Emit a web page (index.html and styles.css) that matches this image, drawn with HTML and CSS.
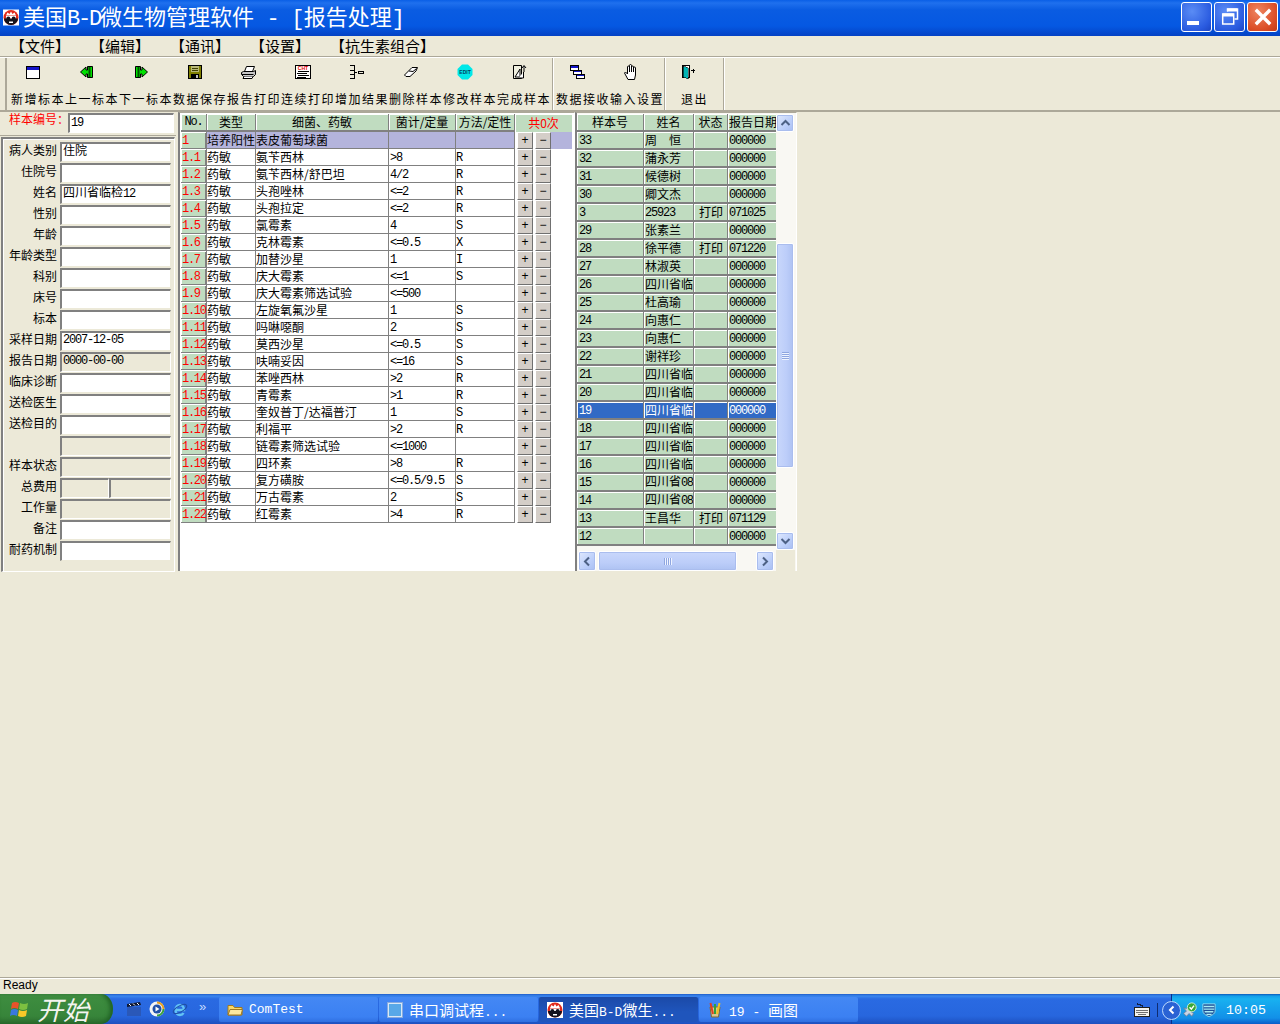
FILE: index.html
```html
<!DOCTYPE html>
<html lang="zh-CN">
<head>
  <meta charset="UTF-8" />
  <title>美国B-D微生物管理软件 - [报告处理]</title>
  <link rel="stylesheet" href="styles.css">
</head>
<body>
  <svg class="defs" width="0" height="0">
    <symbol id="logo" viewBox="0 0 16 16">
      <rect width="16" height="16" fill="#fff"/>
      <circle cx="8" cy="8" r="7.5" fill="#e02a1c"/>
      <path d="M3 6l1.5-3 2 1.5L8 2l1.5 2.500 2-1.500L13 6z" fill="#fff"/>
      <path d="M1 9h14a7 6.500 0 0 1-14 0z" fill="#14141e"/>
      <rect x="3" y="6.500" width="10" height="2.500" fill="#fff"/>
      <circle cx="5.300" cy="9" r="2" fill="#14141e"/>
      <circle cx="10.700" cy="9" r="2" fill="#14141e"/>
      <rect x="6" y="12" width="4" height="1.500" fill="#fff"/>
    </symbol>
  </svg>

  <header class="titlebar">
    <svg class="title-logo"><use href="#logo"/></svg>
    <h1 class="title-text">美国<span class="en">B-D</span>微生物管理软件<span class="en title-sep"> - [</span>报告处理<span class="en">]</span></h1>
    <div class="caption">
      <div class="cap-btn">
        <span class="cap-min"></span>
      </div>
      <div class="cap-btn">
        <svg width="22" height="22" viewBox="0 0 22 22" fill="none" stroke="#fff"><path d="M8.500 5.500V3h10v10h-3" stroke-width="1.500"/><path d="M8 4h10" stroke-width="3"/><rect x="3.700" y="8" width="11" height="10" stroke-width="1.500"/><path d="M3.700 9h11" stroke-width="3"/></svg>
      </div>
      <div class="cap-btn cap-close">
        <svg width="22" height="22" viewBox="0 0 22 22" stroke="#fff" stroke-width="3.400" stroke-linecap="square"><path d="M5 5l12 12M17 5L5 17"/></svg>
      </div>
    </div>
  </header>

  <nav class="menu">
    <span class="menu-item">【文件】</span>
    <span class="menu-item">【编辑】</span>
    <span class="menu-item">【通讯】</span>
    <span class="menu-item">【设置】</span>
    <span class="menu-item">【抗生素组合】</span>
  </nav>

  <div class="toolbar">
    <div class="tool-group group-main">
      <div class="tool">
        <svg class="ico" viewBox="0 0 16 16" shape-rendering="crispEdges"><rect x="1.500" y="2.500" width="13" height="12" fill="#fff" stroke="#000"/><rect x="2" y="3" width="12" height="3" fill="#1414c8"/></svg>
        <span class="tool-label">新增标本</span>
      </div>
      <div class="tool">
        <svg class="ico" viewBox="0 0 16 16"><path d="M1.500 8L7 3v3h1.500V2.500h5v11h-5V10H7v3z" fill="#00e000" stroke="#000"/><rect x="9.500" y="3" width="2" height="10" fill="#005000"/></svg>
        <span class="tool-label">上一标本</span>
      </div>
      <div class="tool">
        <svg class="ico" viewBox="0 0 16 16"><path d="M14.500 8L9 3v3H7.500V2.500h-5v11h5V10H9v3z" fill="#00e000" stroke="#000"/><rect x="4.500" y="3" width="2" height="10" fill="#005000"/></svg>
        <span class="tool-label">下一标本</span>
      </div>
      <div class="tool">
        <svg class="ico" viewBox="0 0 16 16" shape-rendering="crispEdges"><rect x="1.500" y="1.500" width="13" height="13" fill="#808000" stroke="#000"/><rect x="4" y="2" width="8" height="6" fill="#b8b878"/><path d="M5 4h6M5 6h6" stroke="#404000"/><rect x="4" y="10" width="8" height="5" fill="#000"/><rect x="9" y="11" width="2" height="3" fill="#c0c0c0"/></svg>
        <span class="tool-label">数据保存</span>
      </div>
      <div class="tool">
        <svg class="ico" viewBox="0 0 16 16" fill="#fff" stroke="#000"><path d="M5.500 2.500h8l-2 5h-8z"/><path d="M2.500 7.500h10l2-1v4l-2 2h-10l-2-2v-2z" fill="#c8c8c8"/><path d="M1 10.500h11.500" /><path d="M3 12.500l-1 2h9l1-2"/></svg>
        <span class="tool-label">报告打印</span>
      </div>
      <div class="tool">
        <svg class="ico" viewBox="0 0 16 16" shape-rendering="crispEdges"><rect x="0.500" y="1.500" width="15" height="13" fill="#fff" stroke="#000"/><text x="8" y="6" class="ico-cht">CHT</text><path d="M3 7.500h11M2 9.500h10M3 11.500h11M2 13.500h9" stroke="#000"/></svg>
        <span class="tool-label">连续打印</span>
      </div>
      <div class="tool">
        <svg class="ico" viewBox="0 0 16 16" fill="none" stroke="#000" shape-rendering="crispEdges"><path d="M1 1.500h5M5.500 1.500v13M1 6.500h5M1 10.500h5M1 14.500h5M5 8.500h3"/><rect x="9.500" y="7.500" width="5" height="2"/></svg>
        <span class="tool-label">增加结果</span>
      </div>
      <div class="tool">
        <svg class="ico" viewBox="0 0 16 16" fill="#fff" stroke="#000"><path d="M1.500 11L9 3.500h5.500L13 7 7 12.500H3z"/><path d="M6 7l4 .5 3.500-3"/></svg>
        <span class="tool-label">删除样本</span>
      </div>
      <div class="tool">
        <svg class="ico" viewBox="0 0 16 16"><path d="M5 0.500h6L15.500 5v6L11 15.500H5L0.500 11V5z" fill="#00e8e8"/><text x="8" y="10" class="ico-edit">EDIT</text></svg>
        <span class="tool-label">修改样本</span>
      </div>
      <div class="tool">
        <svg class="ico" viewBox="0 0 16 16" fill="#fff" stroke="#000"><path d="M2.500 1.500h8v13h-8z" fill="#f0f0e0"/><path d="M4 13L9 5v8z"/><path d="M11 4l2-2.500L15 4M13 2v6"/><path d="M12.500 8v6h-5" /></svg>
        <span class="tool-label">完成样本</span>
      </div>
    </div>
    <div class="tool-group group-data">
      <div class="tool">
        <svg class="ico" viewBox="0 0 16 16" shape-rendering="crispEdges"><rect x="1.500" y="1.500" width="8" height="5" fill="#fff" stroke="#000"/><rect x="2" y="2" width="7" height="2" fill="#1414c8"/><rect x="4.500" y="6.500" width="8" height="4" fill="#fff" stroke="#000"/><rect x="5" y="7" width="7" height="1" fill="#1414c8"/><rect x="7.500" y="10.500" width="8" height="4" fill="#fff" stroke="#000"/><rect x="8" y="11" width="7" height="1" fill="#1414c8"/></svg>
        <span class="tool-label">数据接收</span>
      </div>
      <div class="tool">
        <svg class="ico" viewBox="0 0 14 16" fill="#fff" stroke="#000"><path d="M4 15.500L.5 9l1-1 2 2V3a1 1 0 0 1 2 0V1.500a1 1 0 0 1 2 0V3a1 1 0 0 1 2 0v1a1 1 0 0 1 2 0v7l-1 4.500z"/><path d="M5.500 3v5M7.500 2v6M9.500 3v5"/></svg>
        <span class="tool-label">输入设置</span>
      </div>
    </div>
    <div class="tool-group group-exit">
      <div class="tool">
        <svg class="ico" viewBox="0 0 16 16" shape-rendering="crispEdges"><rect x="2.500" y="1.500" width="7" height="12" fill="#fff" stroke="#000"/><path d="M3 2l5 2v11l-5-2z" fill="#00b4b4" stroke="#000" stroke-width=".6"/><path d="M11 6.500h4M13 4.500v4" stroke="#000"/></svg>
        <span class="tool-label">退出</span>
      </div>
    </div>
  </div>

  <main class="work">
    <aside class="patient">
      <div class="sample-row">
        <label class="sample-label">样本编号：</label>
        <div class="field sample-input en-text">19</div>
      </div>
      <div class="patient-box">
        <div class="row"><label>病人类别</label><div class="field">住院</div></div>
        <div class="row"><label>住院号</label><div class="field"></div></div>
        <div class="row"><label>姓名</label><div class="field">四川省临检<span class="en-text">12</span></div></div>
        <div class="row"><label>性别</label><div class="field"></div></div>
        <div class="row"><label>年龄</label><div class="field"></div></div>
        <div class="row"><label>年龄类型</label><div class="field"></div></div>
        <div class="row"><label>科别</label><div class="field"></div></div>
        <div class="row"><label>床号</label><div class="field"></div></div>
        <div class="row"><label>标本</label><div class="field"></div></div>
        <div class="row"><label>采样日期</label><div class="field en-text">2007-12-05</div></div>
        <div class="row"><label>报告日期</label><div class="field off en-text">0000-00-00</div></div>
        <div class="row"><label>临床诊断</label><div class="field"></div></div>
        <div class="row"><label>送检医生</label><div class="field"></div></div>
        <div class="row"><label>送检目的</label><div class="field"></div></div>
        <div class="row"><label></label><div class="field off"></div></div>
        <div class="row"><label>样本状态</label><div class="field off"></div></div>
        <div class="row"><label>总费用</label><div class="field off half"></div><div class="field off"></div></div>
        <div class="row"><label>工作量</label><div class="field off"></div></div>
        <div class="row"><label>备注</label><div class="field"></div></div>
        <div class="row"><label>耐药机制</label><div class="field"></div></div>
      </div>
    </aside>

    <section class="results">
      <table class="grid grid-res">
        <colgroup><col class="c-no"><col class="c-type"><col class="c-name"><col class="c-qty"><col class="c-method"><col class="c-ops"></colgroup>
        <thead>
          <tr><th class="en-text">No.</th><th>类型</th><th>细菌、药敏</th><th>菌计/定量</th><th>方法/定性</th><th class="count">共0次</th></tr>
        </thead>
        <tbody>
          <tr class="culture"><td>1</td><td>培养阳性</td><td>表皮葡萄球菌</td><td></td><td></td><td class="ops"><button>+</button><button>−</button></td></tr>
          <tr><td>1.1</td><td>药敏</td><td>氨苄西林</td><td>&gt;8</td><td>R</td><td class="ops"><button>+</button><button>−</button></td></tr>
          <tr><td>1.2</td><td>药敏</td><td>氨苄西林/舒巴坦</td><td>4/2</td><td>R</td><td class="ops"><button>+</button><button>−</button></td></tr>
          <tr><td>1.3</td><td>药敏</td><td>头孢唑林</td><td>&lt;=2</td><td>R</td><td class="ops"><button>+</button><button>−</button></td></tr>
          <tr><td>1.4</td><td>药敏</td><td>头孢拉定</td><td>&lt;=2</td><td>R</td><td class="ops"><button>+</button><button>−</button></td></tr>
          <tr><td>1.5</td><td>药敏</td><td>氯霉素</td><td>4</td><td>S</td><td class="ops"><button>+</button><button>−</button></td></tr>
          <tr><td>1.6</td><td>药敏</td><td>克林霉素</td><td>&lt;=0.5</td><td>X</td><td class="ops"><button>+</button><button>−</button></td></tr>
          <tr><td>1.7</td><td>药敏</td><td>加替沙星</td><td>1</td><td>I</td><td class="ops"><button>+</button><button>−</button></td></tr>
          <tr><td>1.8</td><td>药敏</td><td>庆大霉素</td><td>&lt;=1</td><td>S</td><td class="ops"><button>+</button><button>−</button></td></tr>
          <tr><td>1.9</td><td>药敏</td><td>庆大霉素筛选试验</td><td>&lt;=500</td><td></td><td class="ops"><button>+</button><button>−</button></td></tr>
          <tr><td>1.10</td><td>药敏</td><td>左旋氧氟沙星</td><td>1</td><td>S</td><td class="ops"><button>+</button><button>−</button></td></tr>
          <tr><td>1.11</td><td>药敏</td><td>吗啉噁酮</td><td>2</td><td>S</td><td class="ops"><button>+</button><button>−</button></td></tr>
          <tr><td>1.12</td><td>药敏</td><td>莫西沙星</td><td>&lt;=0.5</td><td>S</td><td class="ops"><button>+</button><button>−</button></td></tr>
          <tr><td>1.13</td><td>药敏</td><td>呋喃妥因</td><td>&lt;=16</td><td>S</td><td class="ops"><button>+</button><button>−</button></td></tr>
          <tr><td>1.14</td><td>药敏</td><td>苯唑西林</td><td>&gt;2</td><td>R</td><td class="ops"><button>+</button><button>−</button></td></tr>
          <tr><td>1.15</td><td>药敏</td><td>青霉素</td><td>&gt;1</td><td>R</td><td class="ops"><button>+</button><button>−</button></td></tr>
          <tr><td>1.16</td><td>药敏</td><td>奎奴普丁/达福普汀</td><td>1</td><td>S</td><td class="ops"><button>+</button><button>−</button></td></tr>
          <tr><td>1.17</td><td>药敏</td><td>利福平</td><td>&gt;2</td><td>R</td><td class="ops"><button>+</button><button>−</button></td></tr>
          <tr><td>1.18</td><td>药敏</td><td>链霉素筛选试验</td><td>&lt;=1000</td><td></td><td class="ops"><button>+</button><button>−</button></td></tr>
          <tr><td>1.19</td><td>药敏</td><td>四环素</td><td>&gt;8</td><td>R</td><td class="ops"><button>+</button><button>−</button></td></tr>
          <tr><td>1.20</td><td>药敏</td><td>复方磺胺</td><td>&lt;=0.5/9.5</td><td>S</td><td class="ops"><button>+</button><button>−</button></td></tr>
          <tr><td>1.21</td><td>药敏</td><td>万古霉素</td><td>2</td><td>S</td><td class="ops"><button>+</button><button>−</button></td></tr>
          <tr><td>1.22</td><td>药敏</td><td>红霉素</td><td>&gt;4</td><td>R</td><td class="ops"><button>+</button><button>−</button></td></tr>
        </tbody>
      </table>
    </section>

    <section class="samples">
      <div class="samples-view">
        <table class="grid grid-list">
          <colgroup><col class="l-id"><col class="l-name"><col class="l-state"><col class="l-date"></colgroup>
          <thead>
            <tr><th>样本号</th><th>姓名</th><th>状态</th><th class="clip">报告日期</th></tr>
          </thead>
          <tbody>
            <tr><td>33</td><td>周&emsp;恒</td><td></td><td>000000</td></tr>
            <tr><td>32</td><td>蒲永芳</td><td></td><td>000000</td></tr>
            <tr><td>31</td><td>候德树</td><td></td><td>000000</td></tr>
            <tr><td>30</td><td>卿文杰</td><td></td><td>000000</td></tr>
            <tr><td>3</td><td class="en-text">25923</td><td class="state">打印</td><td>071025</td></tr>
            <tr><td>29</td><td>张素兰</td><td></td><td>000000</td></tr>
            <tr><td>28</td><td>徐平德</td><td class="state">打印</td><td>071220</td></tr>
            <tr><td>27</td><td>林淑英</td><td></td><td>000000</td></tr>
            <tr><td>26</td><td>四川省临</td><td></td><td>000000</td></tr>
            <tr><td>25</td><td>杜高瑜</td><td></td><td>000000</td></tr>
            <tr><td>24</td><td>向惠仁</td><td></td><td>000000</td></tr>
            <tr><td>23</td><td>向惠仁</td><td></td><td>000000</td></tr>
            <tr><td>22</td><td>谢祥珍</td><td></td><td>000000</td></tr>
            <tr><td>21</td><td>四川省临</td><td></td><td>000000</td></tr>
            <tr><td>20</td><td>四川省临</td><td></td><td>000000</td></tr>
            <tr class="selected"><td>19</td><td>四川省临</td><td></td><td>000000</td></tr>
            <tr><td>18</td><td>四川省临</td><td></td><td>000000</td></tr>
            <tr><td>17</td><td>四川省临</td><td></td><td>000000</td></tr>
            <tr><td>16</td><td>四川省临</td><td></td><td>000000</td></tr>
            <tr><td>15</td><td>四川省<span class="en-tight">08</span></td><td></td><td>000000</td></tr>
            <tr><td>14</td><td>四川省<span class="en-tight">08</span></td><td></td><td>000000</td></tr>
            <tr><td>13</td><td>王昌华</td><td class="state">打印</td><td>071129</td></tr>
            <tr><td>12</td><td></td><td></td><td>000000</td></tr>
          </tbody>
        </table>
      </div>
      <div class="vscroll">
        <div class="sb-btn sb-up"><svg width="11" height="8" viewBox="0 0 11 8" fill="none" stroke="#4d6185" stroke-width="2"><path d="M1.500 6l4-4 4 4"/></svg></div>
        <div class="sb-thumb sb-v"><span class="grip-v"></span></div>
        <div class="sb-btn sb-down"><svg width="11" height="8" viewBox="0 0 11 8" fill="none" stroke="#4d6185" stroke-width="2"><path d="M1.500 2l4 4 4-4"/></svg></div>
      </div>
      <div class="hscroll">
        <div class="sb-btn"><svg width="8" height="11" viewBox="0 0 8 11" fill="none" stroke="#4d6185" stroke-width="2"><path d="M6 1.500l-4 4 4 4"/></svg></div>
        <div class="sb-thumb sb-h"><span class="grip-h"></span></div>
        <div class="sb-btn sb-right"><svg width="8" height="11" viewBox="0 0 8 11" fill="none" stroke="#4d6185" stroke-width="2"><path d="M2 1.500l4 4-4 4"/></svg></div>
      </div>
      <div class="corner"></div>
    </section>
  </main>

  <div class="blank"></div>

  <div class="status"><span>Ready</span></div>

  <footer class="taskbar">
    <div class="start">
      <svg width="20" height="20" viewBox="0 0 20 20"><path d="M2 4q3-2 7 0l-1 6q-4-2-7 0z" fill="#e8522a"/><path d="M10 4q4 2 8 0l-1 6q-4 2-8 0z" fill="#7cc040"/><path d="M1 11q3-2 7 0l-1 6q-4-2-7 0z" fill="#3a78e0"/><path d="M9 11q4 2 8 0l-1 6q-4 2-8 0z" fill="#f8c828"/></svg>
      <span class="start-text">开始</span>
    </div>
    <div class="quick">
      <svg width="16" height="16" viewBox="0 0 16 16"><rect x="1" y="6" width="14" height="9" fill="#2a58b8"/><path d="M1 3l13-2 1 3-14 2z" fill="#101830"/><path d="M3 3l2 2M7 2.500l2 2M11 2l2 2" stroke="#fff"/></svg>
      <svg width="16" height="16" viewBox="0 0 16 16"><circle cx="8" cy="8" r="7.500" fill="#f4f4f4"/><path d="M8 .5a7.500 7.500 0 0 1 7.500 7.500h-2A5.500 5.500 0 0 0 8 2.500z" fill="#e8a020"/><path d="M15.500 8A7.500 7.500 0 0 1 8 15.500v-2A5.500 5.500 0 0 0 13.500 8z" fill="#3aa040"/><circle cx="8" cy="8" r="4.500" fill="#2050a8"/><path d="M6.500 5.500l4 2.500-4 2.500z" fill="#fff"/></svg>
      <svg width="16" height="16" viewBox="0 0 16 16" fill="none"><path d="M3.500 9h8.500c0-3-1.500-5-4-5s-4.500 2-4.500 5 2 5 4.500 5c1.600 0 2.800-.7 3.500-2" stroke="#63c4f4" stroke-width="2.400"/><ellipse cx="8" cy="8" rx="7.500" ry="3" transform="rotate(-30 8 8)" stroke="#1f4fa8"/></svg>
      <span class="quick-more">»</span>
    </div>
    <div class="task">
      <svg width="16" height="16" viewBox="0 0 16 16"><path d="M1 13V3.500h5l1.500 2H15V13z" fill="#f8d868" stroke="#a07820"/><path d="M1 13l2-5.500h12.500L14 13z" fill="#fce8a0" stroke="#a07820"/></svg>
      <span class="en-task">ComTest</span>
    </div>
    <div class="task">
      <svg width="16" height="16" viewBox="0 0 16 16"><rect x="0.500" y="0.500" width="15" height="15" fill="#d8e8f8" stroke="#88aadd"/><rect x="2" y="2" width="12" height="12" fill="#58a8e8"/></svg>
      <span>串口调试程<span class="en-task">...</span></span>
    </div>
    <div class="task task-on">
      <svg class="task-logo"><use href="#logo"/></svg>
      <span>美国<span class="en-task">B-D</span>微生<span class="en-task">...</span></span>
    </div>
    <div class="task">
      <svg width="16" height="16" viewBox="0 0 16 16"><path d="M3 5h10l-1.500 10h-7z" fill="#d8c890" stroke="#806830"/><path d="M6 12L3.500 1" stroke="#e04020" stroke-width="2"/><path d="M8 12V2" stroke="#30a040" stroke-width="2"/><path d="M10 12l2.500-11" stroke="#f0c020" stroke-width="2"/></svg>
      <span><span class="en-task">19 - </span>画图</span>
    </div>
    <div class="tray-left">
      <svg width="16" height="16" viewBox="0 0 16 16" shape-rendering="crispEdges"><path d="M3 1v1h3v1h2v3" fill="none" stroke="#102040"/><rect x="0.500" y="5.500" width="15" height="9" fill="#f4f4f0" stroke="#202020"/><path d="M2 8h12M2 10h12M4 12h8" stroke="#707070"/></svg>
      <span class="tray-sep"></span>
    </div>
    <div class="tray">
      <div class="tray-back"><svg width="10" height="10" viewBox="0 0 10 10" fill="none" stroke="#fff" stroke-width="2"><path d="M6.500 1.500L3 5l3.500 3.500"/></svg></div>
      <svg width="16" height="16" viewBox="0 0 18 18"><path d="M2 7l3 3-3 3 3 3 3-3 3 3 2-3-4-3 1-3z" fill="#c8d4e4" stroke="#708098"/><circle cx="11" cy="6" r="5" fill="#38a838" stroke="#d8f0d8"/><path d="M8.500 6l2 2 3-4" fill="none" stroke="#fff" stroke-width="1.600"/></svg>
      <svg class="tray-shield" width="14" height="16" viewBox="0 0 16 16"><path d="M1 1h14v8q0 4-7 6.500Q1 13 1 9z" fill="#1a4e98" stroke="#9ce0f0"/><path d="M2 4h12M2 7h12M3 10h10M5 13h6" stroke="#a8ecf4" stroke-width="1.500"/></svg>
      <span class="clock">10:05</span>
    </div>
  </footer>
</body>
</html>
```

FILE: styles.css
```css
html, body {
  margin: 0;
  height: 100%;
}
body {
  display: flex;
  flex-direction: column;
  height: 1024px;
  overflow: hidden;
  background: #ece9d8;
  color: #000;
  font-family: "Noto Sans CJK SC", sans-serif;
  font-size: 12px;
}
.defs {
  display: none;
}

/* window title */
.titlebar {
  display: flex;
  align-items: center;
  height: 36px;
  flex-shrink: 0;
  background: linear-gradient(#0a5fe6 0, #1f70ee 3px, #0a5ce2 10px, #0558e2 26px, #0442c4 36px);
}
.title-logo {
  width: 16px;
  height: 17px;
  margin: 0 4px 2px 3px;
}
.title-text {
  margin: 0;
  color: #fff;
  font-size: 22px;
  font-weight: normal;
  line-height: 30px;
  white-space: pre;
  margin-bottom: 1px;
}
.title-text .en {
  font-family: "Liberation Mono", monospace;
  letter-spacing: -2.200px;
}
.title-text .title-sep {
  letter-spacing: -.800px;
}
.caption {
  display: flex;
  gap: 2px;
  margin-left: auto;
  margin-right: 2px;
  margin-bottom: 2px;
}
.cap-btn {
  position: relative;
  display: flex;
  align-items: center;
  justify-content: center;
  box-sizing: border-box;
  width: 31px;
  height: 30px;
  border: 1px solid #fff;
  border-radius: 3px;
  background: radial-gradient(circle at 35% 30%, #5a8cf5, #2a5be0 70%, #1c45c4);
}
.cap-min {
  width: 12px;
  height: 4px;
  margin: 12px 8px 0 0;
  background: #fff;
}
.cap-close {
  background: radial-gradient(circle at 35% 30%, #ee8560, #dc4f28 65%, #c23a16);
}

/* menu */
.menu {
  display: flex;
  gap: 20px;
  flex-shrink: 0;
  height: 20px;
  padding-left: 10px;
  font-size: 15px;
  line-height: 20px;
  border-bottom: 1px solid #aca899;
  box-shadow: 0 1px 0 #fff;
}
.menu-item {
  white-space: nowrap;
}

/* toolbar */
.toolbar {
  display: flex;
  flex-shrink: 0;
  box-sizing: border-box;
  height: 54px;
  margin-top: 1px;
  border-bottom: 2px solid #aca899;
  padding-left: 5px;
}
.tool-group {
  display: flex;
  border-right: 1px solid #aca899;
  box-shadow: 1px 0 0 #fff;
  margin-right: 1px;
}
.group-main {
  box-sizing: border-box;
  width: 548px;
  border-left: 2px solid #aca899;
}
.group-data {
  box-sizing: border-box;
  width: 111px;
}
.group-exit {
  box-sizing: border-box;
  width: 58px;
}
.tool {
  width: 54px;
  flex-shrink: 0;
  padding-top: 6px;
}
.ico {
  display: block;
  width: 16px;
  height: 16px;
  margin-left: 18px;
}
.tool-label {
  display: block;
  margin-top: 12px;
  padding-left: 4px;
  line-height: 14px;
  letter-spacing: 1.500px;
  white-space: nowrap;
}
.group-data .ico {
  margin-left: 15px;
}
.group-data .tool-label {
  padding-left: 2px;
}
.group-exit .ico {
  margin-left: 14px;
}
.group-exit .tool-label {
  padding-left: 15px;
}
.ico-cht {
  fill: #e00000;
  font-family: "Liberation Sans", sans-serif;
  font-size: 5px;
  font-weight: bold;
  text-anchor: middle;
}
.ico-edit {
  fill: #004060;
  font-family: "Liberation Sans", sans-serif;
  font-size: 5px;
  font-weight: bold;
  text-anchor: middle;
}

/* main work area */
.work {
  display: flex;
  flex-shrink: 0;
  height: 460px;
}
.en-text {
  font-family: "Liberation Mono", monospace;
  letter-spacing: -1.200px;
}
.en-tight {
  font-family: "Liberation Mono", monospace;
  letter-spacing: -1.500px;
}
.field {
  flex: 1;
  box-sizing: border-box;
  height: 20px;
  padding-left: 1px;
  background: #fff;
  border-top: 2px solid #808080;
  border-left: 2px solid #808080;
  border-right: 1px solid #ece9d8;
  border-bottom: 1px solid #ece9d8;
  line-height: 12px;
  white-space: nowrap;
  overflow: hidden;
}
.field.en-text {
  padding-top: 1px;
}
.field.off {
  background: #ece9d8;
  border-right-color: #fff;
  border-bottom-color: #fff;
}

/* left panel */
.patient {
  box-sizing: border-box;
  width: 177px;
  flex-shrink: 0;
  padding-right: 1px;
}
.sample-row {
  display: flex;
  align-items: flex-start;
  height: 24px;
  border-bottom: 1px solid #aca899;
  box-sizing: border-box;
  padding: 1px 2px 0 2px;
}
.sample-label {
  box-sizing: border-box;
  width: 66px;
  flex-shrink: 0;
  padding-left: 7px;
  color: #ff0000;
  line-height: 12px;
  white-space: nowrap;
}
.sample-input {
  height: 20px;
  border-right-color: #fff;
  border-bottom-color: #fff;
  line-height: 14px;
}
.patient-box {
  display: flex;
  flex-direction: column;
  gap: 1px;
  box-sizing: border-box;
  height: 435px;
  margin: 1px 1px 0 1px;
  padding: 3px 3px 0 0;
  border-left: 2px solid #808080;
  border-top: 2px solid #808080;
  border-right: 1px solid #fff;
  border-bottom: 1px solid #fff;
  box-shadow: inset 1px 1px 0 #fff;
}
.row {
  display: flex;
  flex-shrink: 0;
}
.row label {
  width: 54px;
  flex-shrink: 0;
  padding-right: 3px;
  text-align: right;
  line-height: 15px;
  white-space: nowrap;
}
.field.half {
  flex: 0 0 49px;
}

/* tables */
.grid {
  table-layout: fixed;
  border-collapse: separate;
  border-spacing: 0;
}
.grid th {
  box-sizing: border-box;
  padding: 0;
  background: #c0dcc0;
  border-right: 1px solid #808080;
  border-bottom: 2px solid #808080;
  box-shadow: inset 1px 1px 0 #fff;
  font-weight: normal;
  line-height: 14px;
  white-space: nowrap;
  overflow: hidden;
}
.grid td {
  box-sizing: border-box;
  padding: 0 0 0 1px;
  border-right: 1px solid #808080;
  border-bottom: 1px solid #808080;
  line-height: 14px;
  white-space: nowrap;
  overflow: hidden;
}

/* result grid */
.results {
  box-sizing: border-box;
  flex-shrink: 0;
  width: 397px;
  margin-left: 1px;
  padding-top: 1px;
  padding-left: 1px;
  background: #fff;
  border-left: 2px solid #808080;
  border-top: 1px solid #aca899;
  border-right: 1px solid #fff;
  height: 459px;
}
.grid-res {
  width: 391px;
}
.c-no { width: 26px; }
.c-type { width: 49px; }
.c-name { width: 133px; }
.c-qty { width: 67px; }
.c-method { width: 59px; }
.c-ops { width: 57px; }
.grid-res th {
  height: 18px;
}
.grid-res tr {
  height: 17px;
}
.grid-res td {
  height: 17px;
  padding-left: 0;
}
.grid-res td:nth-child(1) {
  padding: 1px 0 0 1px;
  background: #c0dcc0;
  box-shadow: inset 1px 1px 0 #fff, inset -1px 0 0 #808080;
  color: #ff0000;
  font-family: "Liberation Mono", monospace;
  letter-spacing: -1.300px;
}
.grid-res td:nth-child(4) {
  padding-left: 1px;
}
.grid-res td:nth-child(4),
.grid-res td:nth-child(5) {
  padding-top: 1px;
  font-family: "Liberation Mono", monospace;
  letter-spacing: -1.200px;
}
.grid-res .count {
  color: #ff0000;
  border-right: 0;
  border-bottom: 0;
}
.culture td {
  background: #b4b4dc;
}
.grid-res .ops {
  padding: 0;
  border: 0;
}
.culture .ops {
  background: linear-gradient(90deg, #fff 36px, #b4b4dc 36px);
}
.ops button {
  float: left;
  box-sizing: border-box;
  width: 16px;
  height: 17px;
  margin: 0 1px 0 2px;
  padding: 0;
  background: #d4cec8;
  border: 1px solid;
  border-color: #fff #707070 #707070 #fff;
  font-family: "Liberation Sans", sans-serif;
  font-size: 12px;
  line-height: 13px;
  color: #000;
}
.ops button + button {
  margin-left: 1px;
}

/* sample list */
.samples {
  display: grid;
  grid-template-columns: 199px 19px;
  grid-template-rows: 436px 22px;
  box-sizing: border-box;
  flex-shrink: 0;
  width: 222px;
  height: 459px;
  padding-top: 1px;
  background: #f9f8f3;
  border-left: 2px solid #808080;
  border-top: 1px solid #aca899;
  border-right: 1px solid #fff;
}
.samples-view {
  overflow: hidden;
  background: #f9f8f3;
}
.grid-list {
  width: 199px;
}
.l-id { width: 67px; }
.l-name { width: 50px; }
.l-state { width: 34px; }
.l-date { width: 48px; }
.grid-list th {
  height: 18px;
}
.grid-list th.clip {
  text-align: left;
  padding-left: 1px;
  border-right: 0;
}
.grid-list td {
  height: 18px;
  background: #c0dcc0;
  border-bottom: 2px solid #808080;
  box-shadow: inset 1px 1px 0 #fff;
}
.grid-list td:nth-child(1),
.grid-list td:nth-child(4),
.grid-list td.en-text {
  padding-top: 1px;
  font-family: "Liberation Mono", monospace;
  letter-spacing: -1.200px;
}
.grid-list td:nth-child(1) {
  padding-left: 2px;
}
.grid-list td:nth-child(4) {
  border-right: 0;
}
.grid-list td.state {
  text-align: center;
}
.grid-list .selected td {
  background: #316ac5;
  color: #fff;
  box-shadow: inset 1px 1px 0 #fff;
}

/* xp scrollbars */
.sb-btn {
  display: flex;
  align-items: center;
  justify-content: center;
  box-sizing: border-box;
  flex-shrink: 0;
  width: 18px;
  height: 18px;
  border: 1px solid #fff;
  border-radius: 2px;
  background: linear-gradient(135deg, #e0e9fd, #bccffa 60%, #a8bef2);
  box-shadow: 0 0 0 1px #a9bdee inset;
}
.sb-thumb {
  box-sizing: border-box;
  border: 1px solid #fff;
  border-radius: 2px;
  background: linear-gradient(90deg, #c9d7fb, #bccdf9 60%, #aec2f2);
  box-shadow: 0 0 0 1px #aabdee inset;
  display: flex;
  align-items: center;
  justify-content: center;
}
.vscroll {
  display: flex;
  flex-direction: column;
  padding-top: 0;
}
.sb-up {
  margin-bottom: 111px;
}
.sb-v {
  width: 18px;
  height: 225px;
}
.sb-down {
  margin-top: auto;
}
.grip-v {
  width: 7px;
  height: 8px;
  background: repeating-linear-gradient(#8fa6e0 0, #8fa6e0 1px, #eef3ff 1px, #eef3ff 2px);
}
.grip-h {
  width: 8px;
  height: 7px;
  background: repeating-linear-gradient(90deg, #8fa6e0 0, #8fa6e0 1px, #eef3ff 1px, #eef3ff 2px);
}
.hscroll {
  display: flex;
  padding: 1px 0 0 1px;
  gap: 2px;
}
.hscroll .sb-btn {
  height: 20px;
}
.sb-h {
  width: 139px;
  height: 20px;
  background: linear-gradient(#c9d7fb, #bccdf9 60%, #aec2f2);
}
.sb-right {
  margin-left: auto;
  margin-right: 2px;
}
.corner {
  background: #ece9d8;
}

/* status line */
.blank {
  flex: 1;
}
.status {
  flex-shrink: 0;
  height: 16px;
  border-top: 1px solid #aca899;
  box-shadow: inset 0 1px 0 #fff;
  font-family: "Liberation Sans", sans-serif;
  line-height: 15px;
  padding-left: 3px;
}

/* xp taskbar */
.taskbar {
  display: flex;
  flex-shrink: 0;
  align-items: stretch;
  height: 30px;
  background: linear-gradient(#1f5cc8 0, #3a86ee 2px, #2a6ae2 5px, #2766de 22px, #1d50bf 30px);
  color: #fff;
  font-size: 15px;
}
.start {
  display: flex;
  align-items: center;
  gap: 7px;
  box-sizing: border-box;
  width: 113px;
  padding-left: 10px;
  background: linear-gradient(#4b9c4e 0, #3d8c3f 4px, #37853a 22px, #2b6c2f 30px);
  border-radius: 0 12px 12px 0 / 0 50% 50% 0;
  box-shadow: inset -3px 0 4px #206224;
}
.start-text {
  font-size: 26px;
  font-style: italic;
  line-height: 28px;
  color: #f4f4f0;
}
.quick {
  display: flex;
  align-items: center;
  gap: 7px;
  box-sizing: border-box;
  width: 106px;
  padding-left: 13px;
}
.quick-more {
  margin: 0 0 6px 4px;
  font-family: "Liberation Sans", sans-serif;
  font-size: 13px;
  color: #c8dcff;
}
.task {
  display: flex;
  align-items: center;
  gap: 6px;
  box-sizing: border-box;
  width: 159px;
  height: 25px;
  margin: 3px 1px 0 0;
  padding-left: 8px;
  border-radius: 2px;
  background: linear-gradient(#4488f4, #3b80f2 80%, #2f6fe0);
  white-space: nowrap;
  overflow: hidden;
}
.task-on {
  background: linear-gradient(#1b4aa8, #1f55bc 60%, #1f55bc);
}
.task-logo {
  width: 16px;
  height: 16px;
}
.en-task {
  font-family: "Liberation Mono", monospace;
  font-size: 13px;
}
.tray-left {
  display: flex;
  align-items: center;
  gap: 7px;
  margin-left: auto;
  padding-top: 2px;
  padding-right: 13px;
}
.tray-sep {
  width: 1px;
  height: 14px;
  background: #0f2c70;
}
.tray {
  display: flex;
  align-items: center;
  box-sizing: border-box;
  width: 109px;
  padding-top: 2px;
  background: linear-gradient(#0c59b9 0, #139ee9 2px, #18b1f0 5px, #1290e8 24px, #095bc9 30px);
  border-left: 1px solid #092e8c;
}
.tray-back {
  display: flex;
  align-items: center;
  justify-content: center;
  flex-shrink: 0;
  width: 19px;
  height: 19px;
  margin-left: -10px;
  margin-right: 1px;
  border-radius: 50%;
  background: #2a62d4;
  border: 1px solid #bcd8fc;
  box-sizing: border-box;
}
.tray-shield {
  margin-left: 4px;
}
.clock {
  margin-left: 10px;
  font-family: "Liberation Mono", monospace;
  font-size: 13.300px;
}
```
